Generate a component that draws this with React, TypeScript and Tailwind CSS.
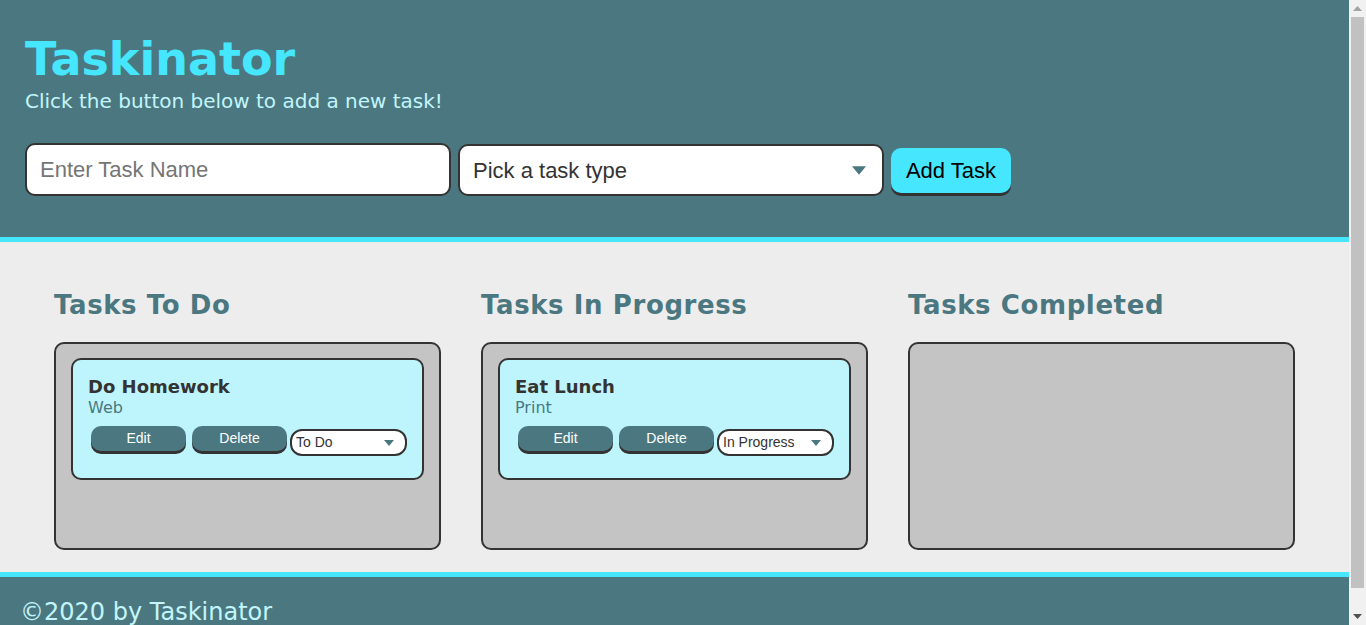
import React from "react";

const dv = { fontFamily: '"DejaVu Sans", Verdana, sans-serif' };
const ar = { fontFamily: '"Liberation Sans", Arial, sans-serif' };

function Arrow({ className }: { className: string }) {
  return (
    <svg className={className} viewBox="0 0 10 6" aria-hidden="true">
      <path d="M0 0 L10 0 L5 6 Z" fill="#4b7880" />
    </svg>
  );
}

function TaskCard({ name, type, status }: { name: string; type: string; status: string }) {
  return (
    <div className="bg-[#bef5fd] border-2 border-[#333333] rounded-[10px] pt-[18px] pb-[22px] pl-[15px] pr-[15px]">
      <h3 className="text-[18px] leading-none font-bold text-[#333333]" style={dv}>{name}</h3>
      <p className="text-[16px] leading-none text-[#4b7880] mt-[4px]" style={dv}>{type}</p>
      <div className="flex items-start mt-[10px]" style={ar}>
        <button className="ml-[3px] w-[95px] h-[25px] rounded-[10px] bg-[#4b7880] text-white text-[14px] shadow-[0_3px_0_#333333]">Edit</button>
        <button className="ml-[6px] w-[95px] h-[25px] rounded-[10px] bg-[#4b7880] text-white text-[14px] shadow-[0_3px_0_#333333]">Delete</button>
        <div className="ml-[3px] mt-[3px] w-[117px] h-[27px] rounded-[12px] border-2 border-[#333333] bg-white flex items-center justify-between pl-[4px] pr-[11px] text-[14px] text-[#333333]">
          <span>{status}</span>
          <Arrow className="w-[10px] h-[6px]" />
        </div>
      </div>
    </div>
  );
}

function Column({ title, children }: { title: string; children?: React.ReactNode }) {
  return (
    <div className="flex-1 min-w-0 flex flex-col">
      <h2 className="text-[26px] leading-none font-bold text-[#4b7880] mb-[24px] tracking-[0.6px]" style={dv}>{title}</h2>
      <div className="h-[208px] bg-[#c4c4c4] border-2 border-[#333333] rounded-[10px] pt-[14px] px-[15px]">
        {children}
      </div>
    </div>
  );
}

function ScrollBar() {
  return (
    <div className="w-[17px] h-[625px] bg-[#f1f1f1] flex flex-col items-center shrink-0">
      <div className="h-[17px] w-full flex items-center justify-center">
        <svg width="9" height="5" viewBox="0 0 9 5" aria-hidden="true">
          <path d="M0 5 L9 5 L4.5 0 Z" fill="#a3a3a3" />
        </svg>
      </div>
      <div className="w-[13px] h-[571px] bg-[#c1c1c1]" />
      <div className="flex-1" />
      <div className="h-[17px] w-full flex items-center justify-center">
        <svg width="9" height="5" viewBox="0 0 9 5" aria-hidden="true">
          <path d="M0 0 L9 0 L4.5 5 Z" fill="#505050" />
        </svg>
      </div>
    </div>
  );
}

export default function App() {
  return (
    <div className="h-[625px] overflow-hidden flex bg-[#ededed]">
      <div className="w-[1349px] shrink-0">
        <header className="bg-[#4b7880] h-[237px] pl-[25px] pt-[36px]">
          <h1 className="text-[46px] leading-none font-bold text-[#45e6fe]" style={dv}>Taskinator</h1>
          <p className="text-[20px] leading-none text-[#c2f5fc] mt-[9px]" style={dv}>Click the button below to add a new task!</p>
          <div className="flex items-end mt-[32px]" style={ar}>
            <div className="w-[426px] h-[53px] bg-white border-2 border-[#333333] rounded-[10px] flex items-center pl-[13px] text-[22px] text-[#757575]">
              Enter Task Name
            </div>
            <div className="ml-[7px] w-[426px] h-[52px] bg-white border-2 border-[#333333] rounded-[10px] flex items-center justify-between pl-[13px] pr-[16px] text-[22px] text-[#333333]">
              <span>Pick a task type</span>
              <Arrow className="w-[14px] h-[9px]" />
            </div>
            <button className="ml-[7px] mb-[3px] w-[120px] h-[45px] bg-[#45e6fe] rounded-[10px] text-[22px] text-black shadow-[0_3px_0_#333333]">
              Add Task
            </button>
          </div>
        </header>
        <main className="border-t-[5px] border-[#45e6fe] bg-[#ededed] pt-[50px] pb-[22px] px-[54px] flex gap-[40px]">
          <Column title="Tasks To Do">
            <TaskCard name="Do Homework" type="Web" status="To Do" />
          </Column>
          <Column title="Tasks In Progress">
            <TaskCard name="Eat Lunch" type="Print" status="In Progress" />
          </Column>
          <Column title="Tasks Completed" />
        </main>
        <footer className="border-t-[5px] border-[#45e6fe] bg-[#4b7880] pt-[23px] pb-[23px] pl-[20px]">
          <p className="text-[24px] leading-none text-[#c2f5fc]" style={dv}>©2020 by Taskinator</p>
        </footer>
      </div>
      <ScrollBar />
    </div>
  );
}
